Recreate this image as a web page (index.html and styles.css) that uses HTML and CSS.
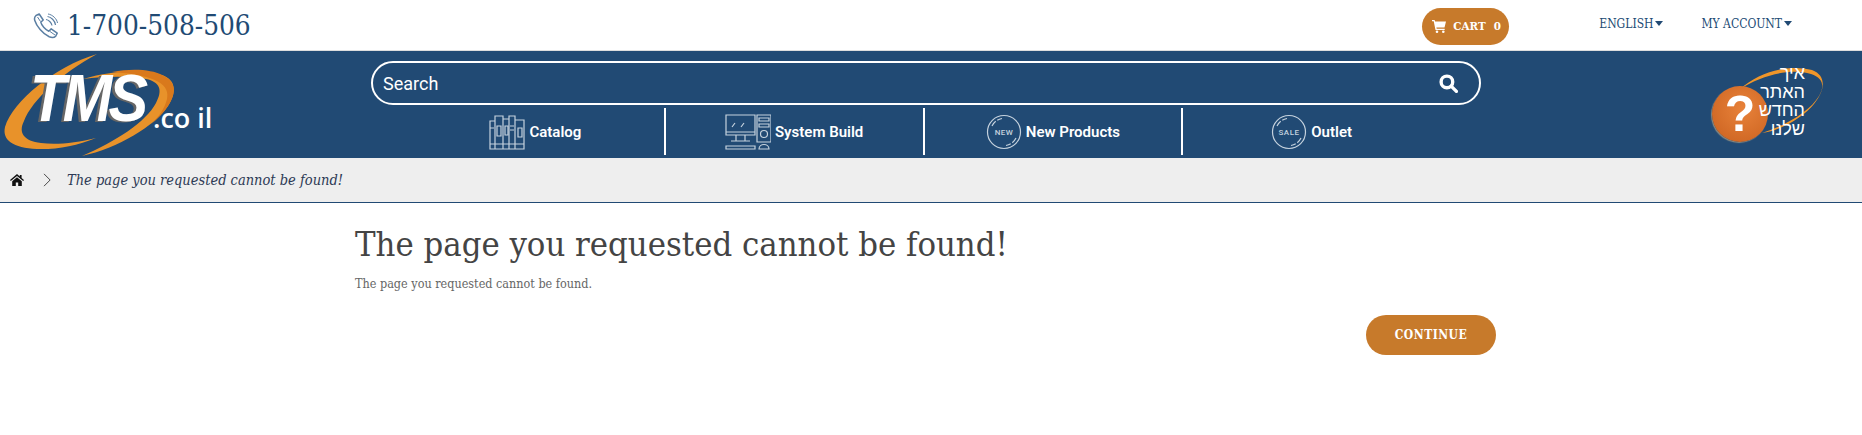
FILE: index.html
```html
<!DOCTYPE html>
<html lang="en">
<head>
  <meta charset="UTF-8" />
  <meta name="viewport" content="width=device-width, initial-scale=1.0"/>
  <title>The page you requested cannot be found!</title>
  <link rel="stylesheet" href="styles.css">
</head>
<body>

<div class="topbar">
  <a class="phone" href="#">
    <svg class="phone-icon" viewBox="0 0 26 26" width="26" height="26" fill="none" stroke="#5b7fa3" stroke-width="1.5" stroke-linejoin="round">
      <path d="M3 2.500l3.200-1.500 4 6-2.400 2.200c.6 3 4.500 7.600 8 9l2.400-2.300 6 4.300-1.500 3c-1.500 1.500-4 1.600-6.500.6C9.500 20.800 3.500 13 1.800 7.500 1.200 5.500 1.800 3.500 3 2.500z"/>
      <path d="M4.500 4l3 4.500M17 18.500l5 3.500" stroke-width="1"/>
      <path d="M13 6.500c2.500 .3 5.500 3 6 6M14.500 3.500c3.500 .5 7.500 4 8 8.500" stroke-width="1.200"/>
      <path d="M15 1c4.500 .6 9 5 9.500 9" stroke-width="1"/>
    </svg>
    <span>1-700-508-506</span>
  </a>
  <a class="cart" href="#">
    <svg viewBox="0 0 14 13" width="14" height="13" fill="#fff"><path d="M0 0h2.600l.5 1.500H14l-1.500 6H4.400l.3 1.300h8v1.200H3.500L1.700 1.200H0z"/><circle cx="5" cy="11.700" r="1.300"/><circle cx="11.300" cy="11.700" r="1.300"/></svg>
    <span class="cart-label">CART</span>
    <span>0</span>
  </a>
  <a class="top-link lang" href="#">ENGLISH<i class="caret"></i></a>
  <a class="top-link account" href="#">MY ACCOUNT<i class="caret"></i></a>
</div>

<div class="header">
  <a class="logo" href="#">
    <svg class="logo-swoosh" viewBox="0 0 176 108" width="176" height="108">
      <path d="M95 1C52 14 11 48 3 74c-3 13 8 21 32 22 20 .6 40-3 59-11-20 5-40 7-55 5-17-2-23-10-17-22C30 47 60 20 95 1z" fill="#e8922a"/>
      <path d="M81 26c30-9 62-10 79-4 14 5 15 17 6 31-13 20-50 42-86 50 33-14 64-34 74-53 7-13 4-21-10-24-15-3-40-3-63 0z" fill="#e8922a"/>
      <path d="M110 19c22-4 40-2 50 3 14 6 15 18 6 31-4 6-10 13-18 19 9-8 15-17 17-26 3-13-8-24-55-27z" fill="#d9791c"/>
    </svg>
    <span class="logo-tms">TMS</span>
    <span class="logo-domain">.co il</span>
  </a>

  <div class="header-middle">
    <form class="search">
      <input type="text" placeholder="Search" />
      <svg viewBox="0 0 18 18" width="19" height="19" fill="none" stroke="#fff" stroke-width="3.200"><circle cx="7.500" cy="7.500" r="5.500"/><path d="M11.500 11.500l5 5" stroke-linecap="round"/></svg>
    </form>
    <nav class="menu">
      <a href="#">
        <svg viewBox="0 0 36 36" width="36" height="36" fill="none" stroke="#c5d2de" stroke-width="1.200">
          <path d="M1 7h5v28H1zM6 2h8v33H6zM14 5h6v30h-6zM20 2h6v33h-6zM26 6h9v29h-9z"/>
          <path d="M8 12h4v10H8zM16 12h3v9h-3zM29 14h4v9h-4zM1 30h34M1 14h4M21 12h4M21 16h4"/>
        </svg>
        <span>Catalog</span>
      </a>
      <a href="#">
        <svg class="wide" viewBox="0 0 46 36" width="46" height="36" fill="none" stroke="#c5d2de" stroke-width="1.200">
          <path d="M1 1h29v20H1zM1 18h29M11 21v6M20 21v6M6 27h19M1 32h29v3H1z"/>
          <path d="M7 13l3-4M16 13l3-4" />
          <path d="M32 1h14v27H32zM34 4h10v3H34zM34 10h10v3H34z"/>
          <circle cx="39" cy="20" r="3.500"/>
          <path d="M34 35c0-6 10-6 10 0z"/>
        </svg>
        <span>System Build</span>
      </a>
      <a href="#">
        <svg viewBox="0 0 36 36" width="36" height="36" fill="none" stroke="#c5d2de" stroke-width="1.200">
          <circle cx="18" cy="18" r="16.500"/>
          <path d="M6 12C8 8 11 5.500 16 4.500M30 24c-2 4-5 6.500-10 7.500" stroke-dasharray="6 2"/>
          <text class="badge-text" x="18" y="21">NEW</text>
        </svg>
        <span>New Products</span>
      </a>
      <a href="#">
        <svg viewBox="0 0 36 36" width="36" height="36" fill="none" stroke="#c5d2de" stroke-width="1.200">
          <circle cx="18" cy="18" r="16.500"/>
          <path d="M6 12C8 8 11 5.500 16 4.500M30 24c-2 4-5 6.500-10 7.500" stroke-dasharray="6 2"/>
          <text class="badge-text" x="18" y="21">SALE</text>
        </svg>
        <span>Outlet</span>
      </a>
    </nav>
  </div>

  <a class="help" href="#">
    <svg class="help-ring" viewBox="0 0 106 80" width="106" height="80" fill="none">
      <path d="M20 24C40 6 70-1 92 5c16 6 12 22 2 34C84 52 60 66 42 68c25-8 48-22 57-37 6-10 4-18-8-22C70 3 42 10 20 24z" fill="#f0962a"/>
    </svg>
    <span class="help-ball">?</span>
    <span class="help-text" dir="rtl" lang="he">איך<br>האתר<br>החדש<br>שלנו</span>
  </a>
</div>

<div class="breadcrumb">
  <svg viewBox="0 0 14 12" width="14" height="12" fill="#111"><path d="M7 0l2.800 2.400V1h1.800v3l2.400 2-.8 1L7 2 .8 7 0 6z"/><path d="M2.200 7.200L7 3.200l4.800 4V12H8.200V8.500H5.800V12H2.200z"/></svg>
  <svg class="crumb-sep" viewBox="0 0 10 16" width="9" height="14" fill="none" stroke="#333" stroke-width="1"><path d="M1 1l7 7-7 7"/></svg>
  <span>The page you requested cannot be found!</span>
</div>

<div class="container">
  <h1>The page you requested cannot be found!</h1>
  <p>The page you requested cannot be found.</p>
  <div class="buttons">
    <a class="btn" href="#">CONTINUE</a>
  </div>
</div>

</body>
</html>
```

FILE: styles.css
```css
body {
  font-family: "DejaVu Serif Condensed", "DejaVu Serif", serif;
  background-color: #fff;
  margin: 0;
  padding: 0;
  color: #666;
}

a {
  text-decoration: none;
}

.topbar {
  display: flex;
  align-items: center;
  height: 50px;
  border-bottom: 1px solid #ddd;
}

.phone {
  display: flex;
  align-items: center;
  gap: 8px;
  margin-left: 33px;
  margin-top: 1px;
  color: #214a74;
  font-size: 27.700px;
}

.cart {
  display: flex;
  align-items: center;
  width: 87px;
  height: 37px;
  box-sizing: border-box;
  padding-left: 10px;
  margin-left: auto;
  background-color: #c77a2b;
  border-radius: 19px;
  color: #fff;
  font-size: 11.500px;
  font-weight: bold;
  margin-top: 2px;
}

.cart-label {
  margin: 0 8px 0 7px;
}

.top-link {
  display: flex;
  align-items: center;
  gap: 2px;
  color: #214a74;
  font-size: 12px;
  margin-top: -3px;
}

.lang {
  margin-left: 90px;
}

.account {
  margin-left: 38px;
  margin-right: 70px;
}

.caret {
  border-top: 5px solid #214a74;
  border-left: 4px solid transparent;
  border-right: 4px solid transparent;
}

.header {
  display: flex;
  height: 107px;
  background-color: #214a74;
}

.logo {
  position: relative;
  display: block;
  width: 371px;
  flex: none;
}

.logo-swoosh {
  position: absolute;
  left: 2px;
  top: 2px;
}

.logo-tms {
  position: absolute;
  left: 30px;
  top: 9px;
  color: #fff;
  font-family: "Liberation Sans", sans-serif;
  font-size: 66px;
  font-weight: bold;
  font-style: italic;
  letter-spacing: -4px;
  text-shadow: -3px 1px 0 #666;
  transform: scaleX(.9);
  transform-origin: left;
}

.logo-domain {
  position: absolute;
  left: 153px;
  top: 48px;
  color: #fff;
  font-family: "Open Sans", sans-serif;
  font-size: 27px;
  font-weight: 600;
}

.header-middle {
  width: 1110px;
  flex: none;
  padding-top: 10px;
}

.search {
  display: flex;
  align-items: center;
  height: 44px;
  box-sizing: border-box;
  border: 2px solid #fff;
  border-radius: 22px;
  padding: 0 21px 0 10px;
}

.search input {
  flex: 1;
  background: transparent;
  border: none;
  outline: none;
  color: #fff;
  font-family: Roboto, sans-serif;
  font-size: 18px;
  padding: 0;
}

.search input::placeholder {
  color: #fff;
  opacity: 1;
}

.menu {
  display: flex;
  margin: 3px 41px 0 36px;
}

.menu a {
  flex: 1;
  display: flex;
  align-items: center;
  justify-content: center;
  gap: 4px;
  height: 47px;
  color: #fff;
  font-family: Roboto, sans-serif;
  font-size: 15px;
  font-weight: 600;
  border-left: 2px solid #fff;
}

.menu a:first-child {
  border-left: none;
}

.badge-text {
  fill: #c5d2de;
  stroke: none;
  font-family: Roboto, sans-serif;
  font-size: 8px;
  font-weight: 500;
  letter-spacing: .5px;
  text-anchor: middle;
}

.help {
  position: relative;
  flex: 1;
  display: block;
}

.help-ring {
  position: absolute;
  left: 239px;
  top: 14px;
}

.help-ball {
  position: absolute;
  left: 231px;
  top: 35px;
  width: 56px;
  height: 56px;
  border-radius: 50%;
  background: radial-gradient(circle at 55% 40%, #e8823a, #c9601e);
  box-shadow: -1px 1px 1px #8a8a80;
  color: #fff;
  font-family: "Liberation Sans", sans-serif;
  font-size: 50px;
  font-weight: bold;
  line-height: 56px;
  text-align: center;
}

.help-text {
  position: absolute;
  left: 254px;
  top: 13px;
  width: 70px;
  color: #fff;
  font-family: "Liberation Sans", "DejaVu Sans", sans-serif;
  font-size: 18px;
  line-height: 18.500px;
}

.breadcrumb {
  display: flex;
  align-items: center;
  height: 44px;
  padding-left: 10px;
  background-color: #eee;
  border-bottom: 1px solid #214a74;
  color: #2d3a55;
  font-size: 14.500px;
  font-style: italic;
}

.crumb-sep {
  margin: 0 15px 0 19px;
}

.container {
  width: 1152px;
  margin-left: 355px;
}

h1 {
  margin: 21px 0 0;
  color: #444;
  font-size: 34.300px;
  font-weight: 400;
  line-height: 40px;
}

p {
  margin: 11px 0 0;
  font-size: 12.500px;
  line-height: 18px;
}

.buttons {
  display: flex;
  justify-content: flex-end;
  padding-right: 11px;
  margin-top: 22px;
}

.btn {
  display: flex;
  align-items: center;
  justify-content: center;
  width: 130px;
  height: 40px;
  background-color: #c77a2b;
  border-radius: 20px;
  color: #fff;
  font-size: 12px;
  font-weight: bold;
  letter-spacing: .5px;
}
```
